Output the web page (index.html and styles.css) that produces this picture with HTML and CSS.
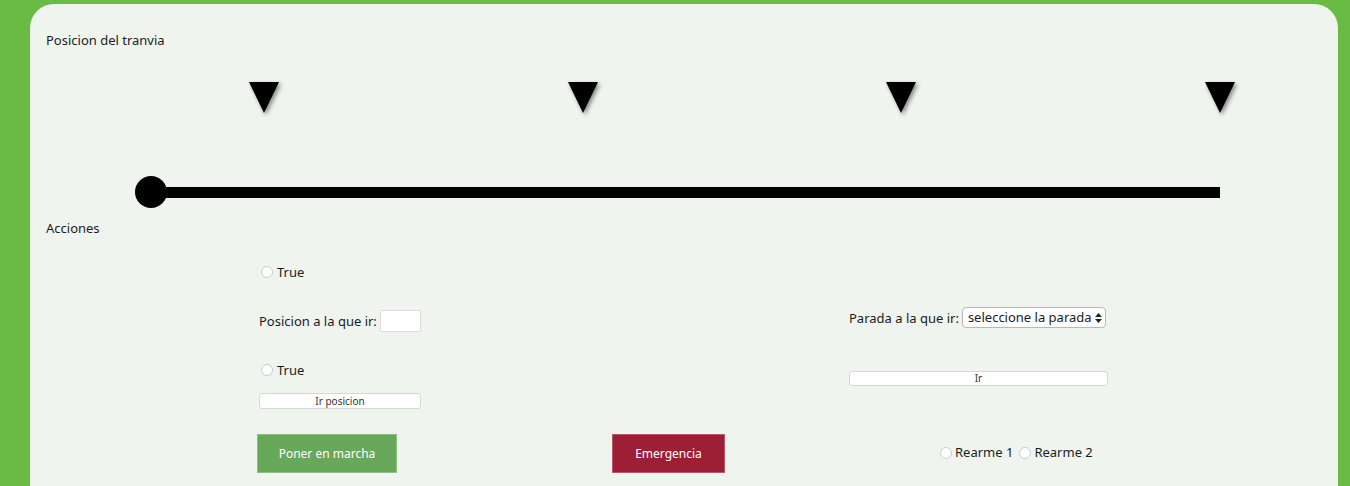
FILE: index.html
```html
<!DOCTYPE html>
<html lang="es">
<head>
<meta charset="utf-8">
<title>Tranvia</title>
<link rel="stylesheet" href="styles.css">
</head>
<body>
<div class="page">
  <main class="card">
    <h2 class="section-title">Posicion del tranvia</h2>
    <div class="track">
      <div class="stops">
        <svg class="stop" viewBox="0 0 30 31" width="30" height="31"><polygon points="0,0 30,0 15,31"/></svg>
        <svg class="stop" viewBox="0 0 30 31" width="30" height="31"><polygon points="0,0 30,0 15,31"/></svg>
        <svg class="stop" viewBox="0 0 30 31" width="30" height="31"><polygon points="0,0 30,0 15,31"/></svg>
        <svg class="stop" viewBox="0 0 30 31" width="30" height="31"><polygon points="0,0 30,0 15,31"/></svg>
      </div>
      <div class="rail">
        <span class="tram"></span>
        <span class="line"></span>
      </div>
    </div>
    <h2 class="section-title actions-title">Acciones</h2>
    <div class="actions">
      <div class="upper">
        <div class="left-col">
          <label class="radio-row"><input type="radio" class="radio" name="r1"><span>True</span></label>
          <label class="field-row">Posicion a la que ir:<input type="text" class="pos-input"></label>
          <label class="radio-row second"><input type="radio" class="radio" name="r2"><span>True</span></label>
          <button class="small-btn pos-btn">Ir posicion</button>
        </div>
        <div class="right-col">
          <label class="field-row select-row">Parada a la que ir:
            <span class="select-wrap">
              <select class="stop-select"><option>seleccione la parada</option></select>
              <svg class="select-arrows" width="7" height="10" viewBox="0 0 7 10"><polygon points="3.5,0 7,4 0,4"/><polygon points="0,6 7,6 3.5,10"/></svg>
            </span>
          </label>
          <button class="small-btn go-btn">Ir</button>
        </div>
      </div>
      <div class="lower">
        <button class="big-btn start-btn">Poner en marcha</button>
        <button class="big-btn emergency-btn">Emergencia</button>
        <div class="rearm">
          <label class="radio-inline"><input type="radio" class="radio" name="rearme1"><span>Rearme 1</span></label>
          <label class="radio-inline"><input type="radio" class="radio" name="rearme2"><span>Rearme 2</span></label>
        </div>
      </div>
    </div>
  </main>
</div>
</body>
</html>
```

FILE: styles.css
```css
* { box-sizing: border-box; }
html, body { margin: 0; padding: 0; }
body {
  background: #6abb43;
  font-family: "Noto Sans", "Open Sans", sans-serif;
  font-size: 13px;
  color: #1c1c1c;
  overflow: hidden;
  height: 486px;
}
.page {
  height: 486px;
  padding: 4px 12px 0 30px;
}
.card {
  background: #eff4ef;
  border-radius: 24px 24px 0 0;
  padding: 26px 16px 0 16px;
  height: 100%;
}
.section-title {
  margin: 0;
  font-size: 13px;
  font-weight: normal;
  line-height: 20px;
}
.track {
  margin-top: 32px;
}
.stops {
  display: flex;
  justify-content: space-between;
  padding-left: 203px;
  width: 1189px;
}
.stop {
  display: block;
  fill: #000;
  filter: drop-shadow(2px 2px 2px rgba(0,0,0,0.45));
}
.rail {
  display: flex;
  align-items: center;
  margin-top: 63px;
  margin-left: 89px;
  height: 32px;
}
.tram {
  width: 32px;
  height: 32px;
  border-radius: 50%;
  background: #000;
  flex: none;
}
.line {
  display: block;
  height: 11px;
  width: 1057px;
  margin-left: -4px;
  background: #000;
}
.actions-title {
  margin-top: 10px;
}
.actions {
  margin-left: 211px;
}
.upper {
  display: flex;
  margin-top: 24px;
}
.left-col {
  width: 592px;
  display: flex;
  flex-direction: column;
  align-items: flex-start;
  padding-left: 2px;
}
.radio-row, .radio-inline {
  display: flex;
  align-items: center;
  line-height: 20px;
  height: 20px;
}
.radio {
  appearance: none;
  -webkit-appearance: none;
  width: 12px;
  height: 12px;
  margin: 0 4px 0 2px;
  border: 1px solid #c9cbc9;
  border-radius: 50%;
  background: #fff;
}
.field-row {
  display: flex;
  align-items: center;
  margin-top: 28px;
  height: 22px;
}
.pos-input {
  width: 41px;
  height: 22px;
  margin-left: 3px;
  border: 1px solid #dcdcdc;
  border-radius: 2px;
  background: #fff;
  padding: 0;
}
.radio-row.second {
  margin-top: 28px;
}
.small-btn {
  appearance: none;
  font-family: inherit;
  font-size: 10px;
  color: #333;
  background: #fff;
  border: 1px solid #d6d6d6;
  border-radius: 3px;
  height: 16px;
  padding: 0;
  line-height: 14px;
}
.pos-btn {
  width: 162px;
  margin-top: 13px;
}
.right-col {
  display: flex;
  flex-direction: column;
  align-items: flex-start;
  padding-top: 45px;
}
.select-row {
  margin-top: 0;
  height: 21px;
}
.select-wrap {
  position: relative;
  margin-left: 3px;
}
.stop-select {
  appearance: none;
  -webkit-appearance: none;
  font-family: inherit;
  font-size: 13px;
  color: #1c1c1c;
  width: 144px;
  height: 21px;
  padding: 0 10px 0 5px;
  background: #fff;
  border: 1px solid #b9b9b9;
  border-radius: 4px;
  line-height: 19px;
}
.select-arrows {
  position: absolute;
  right: 4px;
  top: 6px;
  fill: #222;
  pointer-events: none;
}
.go-btn {
  width: 259px;
  height: 15px;
  line-height: 13px;
  margin-top: 43px;
}
.lower {
  display: flex;
  align-items: center;
  margin-top: 25px;
}
.big-btn {
  appearance: none;
  font-family: inherit;
  font-size: 12px;
  color: #fff;
  height: 39px;
  padding: 0;
  border-radius: 0;
}
.start-btn {
  width: 140px;
  background: #67a85a;
  border: 1px solid #8cc07f;
  margin-right: 215px;
}
.emergency-btn {
  width: 113px;
  background: #9c1f35;
  border: 1px solid #b8566a;
  margin-right: 215px;
}
.rearm {
  display: flex;
  align-items: center;
  gap: 6px;
  margin-top: -4px;
}
.rearm .radio {
  margin: 3px 3px 0 0;
}
```
